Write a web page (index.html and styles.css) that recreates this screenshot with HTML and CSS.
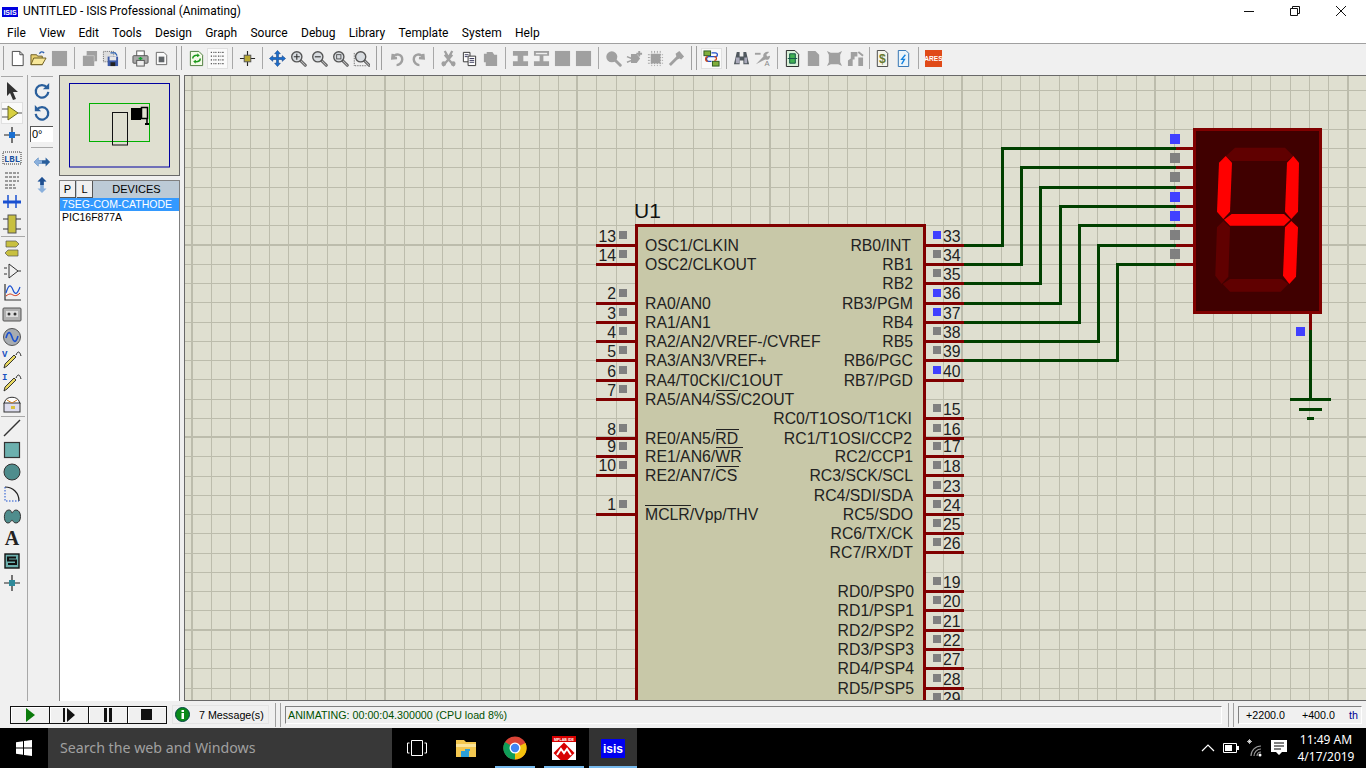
FILE: index.html
```html
<!DOCTYPE html>
<html lang="en">
<head>
    <meta charset="UTF-8">
    <meta name="viewport" content="width=device-width, initial-scale=1.0">
    <title>UNTITLED - ISIS Professional (Animating)</title>
    <link rel="stylesheet" href="styles.css">
</head>
<body>
    <svg class="defs" width="0" height="0">
        <symbol id="mag" viewBox="0 0 20 20">
            <path d="M12 12l6 6" stroke="#555" stroke-width="3.4" stroke-linecap="round"/>
            <path d="M12 12l6 6" stroke="#bbb" stroke-width="1.2" stroke-linecap="round"/>
            <circle cx="8" cy="8" r="6" fill="#d8dce0" stroke="#555" stroke-width="1.6"/>
        </symbol>
        <symbol id="probe" viewBox="0 0 20 20">
            <path d="M2 19l3-2 9-9-2-2-9 9z" fill="#e8d860" stroke="#222" stroke-width=".9"/>
            <path d="M14 6c2-5 4-3 5 1" fill="none" stroke="#222"/>
        </symbol>
    </svg>

    <div class="titlebar">
        <svg class="app-icon" viewBox="0 0 16 10"><rect width="16" height="10" fill="#0000e0"/><text x="8" y="8" class="isis-txt">ISIS</text></svg>
        <span class="title-text">UNTITLED - ISIS Professional (Animating)</span>
        <div class="win-btns">
            <svg width="10" height="10" viewBox="0 0 10 10"><path d="M0 5.5h10" stroke="#111"/></svg>
            <svg width="10" height="10" viewBox="0 0 10 10"><path d="M.5 2.5h7v7h-7zM2.5 2.5v-2h7v7h-2" fill="none" stroke="#111"/></svg>
            <svg width="10" height="10" viewBox="0 0 10 10"><path d="M0 0l10 10M10 0L0 10" stroke="#111"/></svg>
        </div>
    </div>

    <div class="menubar">
        <span>File</span><span>View</span><span>Edit</span><span>Tools</span><span>Design</span><span>Graph</span><span>Source</span><span>Debug</span><span>Library</span><span>Template</span><span>System</span><span>Help</span>
    </div>

    <div class="toolbar">
        <i class="grip first"></i>
        <span class="tb"><svg viewBox="0 0 18 18"><path d="M3.5 1.5h8l3.500 3.500v11.500h-11.500z" fill="#fff" stroke="#444"/><path d="M11.500 1.500v3.500h3.500" fill="none" stroke="#444"/></svg></span>
        <span class="tb"><svg viewBox="0 0 18 18"><path d="M1 5h6l1 1.500h5v9h-12z" fill="#e8d070" stroke="#6a5a20"/><path d="M1 15.500l3-7h13l-4 7z" fill="#f8e89a" stroke="#6a5a20"/><path d="M10 4c1-2.500 3-2.500 5-1" fill="none" stroke="#2b60b0" stroke-width="1.500"/></svg></span>
        <span class="tb"><svg viewBox="0 0 18 18"><rect x="1" y="1" width="16" height="16" fill="#a0a0a0"/></svg></span>
        <i class="sep"></i>
        <span class="tb"><svg viewBox="0 0 18 18"><path d="M6 1h11v11h-3v5h-12v-11h4z" fill="#a0a0a0"/><path d="M6 6h8v6" fill="none" stroke="#c4c4c4"/></svg></span>
        <span class="tb"><svg viewBox="0 0 18 18"><rect x="1.500" y="1.500" width="11" height="11" fill="#ddd" stroke="#666" stroke-dasharray="1 1"/><path d="M6 7h11v10h-11z" fill="#3c5aa8"/><rect x="8" y="7" width="7" height="4" fill="#e8e8e8"/><rect x="9" y="13" width="5" height="4" fill="#222"/><path d="M9 3h5l2 3" fill="none" stroke="#2b60b0" stroke-width="1.300"/></svg></span>
        <i class="sep"></i>
        <span class="tb"><svg viewBox="0 0 18 18"><rect x="5" y="1" width="8" height="6" fill="#fff" stroke="#555"/><rect x="1" y="6" width="16" height="8" rx="1" fill="#a8a8a8" stroke="#555"/><rect x="5" y="11" width="8" height="6" fill="#eee" stroke="#555"/><path d="M7 9h4M9 7.500v3" stroke="#10a030" stroke-width="1.500"/></svg></span>
        <span class="tb"><svg viewBox="0 0 18 18"><path d="M3.500 2.500h8l3 3v10h-11z" fill="#fafafa" stroke="#666"/><rect x="6" y="7" width="6" height="6" fill="#606468"/></svg></span>
        <i class="grip"></i>
        <span class="tb"><svg viewBox="0 0 18 18"><path d="M2.500 1.500h9l4 4v11h-13z" fill="#f4fbe8" stroke="#4a7a3a"/><path d="M5 9c0-3 3-4 6-3M13 9c0 3-3 4-6 3" fill="none" stroke="#1c9a1c" stroke-width="1.700"/><path d="M10 3.500l2.500 2.500-3 1.500zM8 14.500l-2.500-2.500 3-1.500z" fill="#1c9a1c"/></svg></span>
        <span class="tb on"><svg viewBox="0 0 18 18"><path d="M2 2.500h14M2 6.500h14M2 10.500h14M2 14.500h14" stroke="#444" stroke-dasharray="1 1.500"/><path d="M2 2v15M6 2v15M10 2v15M14 2v15" stroke="#444" stroke-dasharray="1 3" transform="translate(.5 0)"/></svg></span>
        <i class="sep"></i>
        <span class="tb"><svg viewBox="0 0 18 18"><path d="M9 1v16M1 9h16" stroke="#222" stroke-width="1.200"/><rect x="5.500" y="5.500" width="7" height="7" fill="#b8a830" stroke="#555"/></svg></span>
        <i class="sep"></i>
        <span class="tb"><svg viewBox="0 0 18 18"><path d="M9 .5l3 3.500h-2v4h4v-2l3.500 3-3.500 3v-2h-4v4h2l-3 3.500-3-3.500h2v-4h-4v2l-3.500-3 3.500-3v2h4v-4h-2z" fill="#1a6fd0" stroke="#0a3a80" stroke-width=".6"/></svg></span>
        <span class="tb"><svg viewBox="0 0 20 20"><use href="#mag"/><path d="M4.500 8h7M8 4.500v7" stroke="#333" stroke-width="1.300"/></svg></span>
        <span class="tb"><svg viewBox="0 0 20 20"><use href="#mag"/><path d="M4.500 8h7" stroke="#333" stroke-width="1.300"/></svg></span>
        <span class="tb"><svg viewBox="0 0 20 20"><use href="#mag"/><rect x="5.500" y="5.500" width="5" height="5" fill="none" stroke="#444"/></svg></span>
        <span class="tb"><svg viewBox="0 0 20 20"><path d="M1.500 3.500v15h15" fill="none" stroke="#444" stroke-dasharray="1 1"/><use href="#mag" x="1"/></svg></span>
        <i class="grip wide"></i>
        <span class="tb"><svg viewBox="0 0 18 18"><path d="M4 4l-.5 5 5-.5M4 8c3-5 10-4 10 2 0 3-3 6-6 6" fill="none" stroke="#a0a0a0" stroke-width="2.600"/></svg></span>
        <span class="tb"><svg viewBox="0 0 18 18"><path d="M14 4l.5 5-5-.5M14 8c-3-5-10-4-10 2 0 3 3 6 6 6" fill="none" stroke="#a0a0a0" stroke-width="2.600"/></svg></span>
        <i class="sep"></i>
        <span class="tb"><svg viewBox="0 0 18 18"><path d="M5 1l4 7 4-7M3 17l10-12M15 17l-10-12" fill="none" stroke="#a0a0a0" stroke-width="2.400"/><circle cx="4" cy="14.500" r="2.500" fill="#a0a0a0"/><circle cx="14" cy="14.500" r="2.500" fill="#a0a0a0"/></svg></span>
        <span class="tb"><svg viewBox="0 0 18 18"><path d="M2.500 2.500h7v10h-7z" fill="#fff" stroke="#333"/><path d="M7.500 6.500h8v10h-8z" fill="#fff" stroke="#333"/><path d="M9 9h5M9 11h5M9 13h5" stroke="#335"/><path d="M4 5h4M4 7h3" stroke="#335"/></svg></span>
        <span class="tb"><svg viewBox="0 0 18 18"><path d="M5 2h6l2 3h3v12h-12v-4h-2v-9h3z" fill="#a0a0a0"/></svg></span>
        <i class="sep"></i>
        <span class="tb"><svg viewBox="0 0 18 18"><path d="M1 1h16v5h-5v6h5v5h-16v-5h5v-6h-5z" fill="#a0a0a0"/></svg></span>
        <span class="tb"><svg viewBox="0 0 18 18"><path d="M1 1h16v5h-6v6h6v5h-16v-5h6v-6h-6z" fill="#a0a0a0"/><path d="M3 3h12v1.500h-12" fill="#eee"/></svg></span>
        <span class="tb"><svg viewBox="0 0 18 18"><rect x="1" y="1" width="16" height="16" fill="#a0a0a0"/></svg></span>
        <span class="tb"><svg viewBox="0 0 18 18"><rect x="1" y="1" width="16" height="16" fill="#a0a0a0"/></svg></span>
        <i class="sep"></i>
        <span class="tb"><svg viewBox="0 0 20 20"><path d="M12 12l6 6" stroke="#a0a0a0" stroke-width="3.400" stroke-linecap="round"/><circle cx="8" cy="8" r="6.500" fill="#a0a0a0"/></svg></span>
        <span class="tb"><svg viewBox="0 0 18 18"><path d="M1 13l5-2M1 7l5 2M6 5h5l3 4-3 4h-5z" fill="#a0a0a0" stroke="#a0a0a0" stroke-width="1.500"/><path d="M14 1v6M11 4h6" stroke="#a0a0a0" stroke-width="2"/></svg></span>
        <span class="tb"><svg viewBox="0 0 18 18"><rect x="4" y="4" width="10" height="10" fill="#a0a0a0"/><path d="M5 1v16M8 1v16M11 1v16M14 1v16M1 5h16M1 8h16M1 11h16M1 14h16" stroke="#a0a0a0" stroke-dasharray="2 1"/></svg></span>
        <span class="tb"><svg viewBox="0 0 18 18"><path d="M2 16l9-9" stroke="#a0a0a0" stroke-width="3"/><path d="M8 4l4-3 5 6-3 3-2-1-2 1z" fill="#a0a0a0"/></svg></span>
        <i class="grip"></i>
        <span class="tb on"><svg viewBox="0 0 18 18"><rect x="1" y="1" width="7" height="5" fill="#7fae3c" stroke="#2d5a20"/><rect x="10" y="12" width="7" height="5" fill="#7fae3c" stroke="#2d5a20"/><path d="M9 3h4c3 0 3 4 0 4H6c-3 0-3 5 0 5h3" fill="none" stroke="#2050c8" stroke-width="1.300"/><path d="M5 7c-3 0-3 5 0 5M12 7c3 0 3 4 0 4" fill="none" stroke="#d04010" stroke-width="1.300"/></svg></span>
        <i class="sep"></i>
        <span class="tb"><svg viewBox="0 0 18 18"><path d="M4 2h3v5h4v-5h3l3 13h-6v-4h-4v4h-6z" fill="#50585e"/><path d="M3 8h4v6h-4zM12 8h3v6h-3z" fill="#aab"/></svg></span>
        <span class="tb"><svg viewBox="0 0 18 18"><path d="M2 15l8-8c-1-3 2-6 6-5l-3 3 1 2 3-1c0 4-3 5-5 4" fill="#a0a0a0"/><path d="M1 4h6" stroke="#a0a0a0" stroke-width="2"/><text x="11" y="17" class="tiny">A</text></svg></span>
        <i class="sep"></i>
        <span class="tb"><svg viewBox="0 0 18 18"><path d="M2.500 .5h9l4 4v13h-13z" fill="#d8f0d8" stroke="#222"/><path d="M6 4h6v10h-6z" fill="#40b050" stroke="#154"/><path d="M4 9h10" stroke="#154"/></svg></span>
        <span class="tb"><svg viewBox="0 0 18 18"><path d="M3 1h8l4 4v12h-12z" fill="#a0a0a0"/></svg></span>
        <span class="tb"><svg viewBox="0 0 18 18"><path d="M1 1l4 2h8l4-2-2 4v8l2 4-4-2h-8l-4 2 2-4v-8z" fill="#a0a0a0"/></svg></span>
        <span class="tb"><svg viewBox="0 0 18 18"><path d="M4 2h7v5h-3v3h-2v7h-5v-6l3-2zM12 8h5v9h-5z" fill="#a0a0a0"/><path d="M12 2l5 4" stroke="#a0a0a0" stroke-width="2"/></svg></span>
        <i class="sep thin"></i>
        <span class="tb"><svg viewBox="0 0 18 18"><path d="M3.500 .5h8l3 3v14h-11z" fill="#f4f4ea" stroke="#444"/><text x="9" y="14" class="dollar">$</text></svg></span>
        <span class="tb"><svg viewBox="0 0 18 18"><path d="M3.500 .5h8l3 3v14h-11z" fill="#eaf4fa" stroke="#2b6fb0"/><path d="M11 5l-4 5h3l-3 5" fill="none" stroke="#1080e0" stroke-width="1.400"/></svg></span>
        <i class="sep"></i>
        <span class="tb"><svg viewBox="0 0 18 18"><rect width="18" height="18" fill="#e04a18"/><text x="9" y="12" class="ares">ARES</text></svg></span>
    </div>

    <div class="main">
        <div class="rail">
            <hr class="rail-top">
            <span class="ri"><svg viewBox="0 0 20 20"><path d="M5 1l11 10h-5l3 7-3 1-3-7-3 3z" fill="#333"/></svg></span>
            <span class="ri on"><svg viewBox="0 0 20 20"><path d="M6 3l10 7-10 7z" fill="#d8d040" stroke="#6a6a20"/><path d="M0 6h6M0 14h6M16 10h4" stroke="#555"/></svg></span>
            <span class="ri"><svg viewBox="0 0 20 20"><path d="M10 2v16M2 10h16" stroke="#222" stroke-width="1.200"/><rect x="7" y="7" width="6" height="6" fill="#1a6fd0"/></svg></span>
            <span class="ri"><svg viewBox="0 0 20 20"><rect x="1" y="4" width="18" height="12" fill="none" stroke="#333" stroke-dasharray="1 1"/><text x="10" y="14" class="lbl">LBL</text></svg></span>
            <span class="ri"><svg viewBox="0 0 20 20"><path d="M3 3h14M3 7h14M3 11h14M3 15h10M3 18h12" stroke="#444" stroke-dasharray="3 1"/></svg></span>
            <span class="ri"><svg viewBox="0 0 20 20"><path d="M1 10h18" stroke="#1a50d0" stroke-width="3"/><path d="M6 3v13M14 3v13" stroke="#1a50d0" stroke-width="1.500"/></svg></span>
            <span class="ri"><svg viewBox="0 0 20 20"><rect x="6" y="1" width="8" height="18" fill="#c8c040" stroke="#555"/><path d="M1 5h5M1 15h5M14 5h5M14 15h5" stroke="#333"/></svg></span>
            <hr class="rail-sep">
            <span class="ri"><svg viewBox="0 0 20 20"><path d="M4 3h10l3 3-3 3H4zM16 12H6l-3 3 3 3h10z" fill="#c8c040" stroke="#555" stroke-width=".7"/></svg></span>
            <span class="ri"><svg viewBox="0 0 20 20"><path d="M7 3l9 7-9 7zM2 7h3M2 13h3M16 10h3" fill="none" stroke="#333"/></svg></span>
            <span class="ri"><svg viewBox="0 0 20 20"><path d="M3 1v16h16" fill="none" stroke="#333" stroke-width="1.200"/><path d="M4 10c3-10 5-8 7-3s4 5 7-3" fill="none" stroke="#1a50d0" stroke-width="1.200"/><path d="M4 13c4-3 5-2 7-1s4 1 7-2" fill="none" stroke="#d03010"/></svg></span>
            <span class="ri"><svg viewBox="0 0 20 20"><rect x="1" y="3" width="18" height="13" rx="1" fill="#b0b0b0" stroke="#555"/><rect x="4" y="6" width="12" height="6" fill="#ddd"/><circle cx="7" cy="9" r="1.500" fill="#333"/><circle cx="13" cy="9" r="1.500" fill="#333"/></svg></span>
            <span class="ri"><svg viewBox="0 0 20 20"><circle cx="10" cy="10" r="8.500" fill="#a8acb0" stroke="#555"/><path d="M4 11c2-7 4-7 6-1s4 6 6-1" fill="none" stroke="#1a50d0" stroke-width="1.600"/></svg></span>
            <span class="ri"><svg viewBox="0 0 20 20"><use href="#probe"/><text x="0" y="8" class="probe-l">V</text></svg></span>
            <span class="ri"><svg viewBox="0 0 20 20"><use href="#probe"/><text x="0" y="8" class="probe-l">I</text></svg></span>
            <span class="ri"><svg viewBox="0 0 20 20"><path d="M3 7c2-5 12-5 14 0l1 3h-16z" fill="#fff" stroke="#333"/><rect x="2" y="9" width="16" height="9" fill="#dde" stroke="#333"/><path d="M5 6l5 3 5-3" fill="none" stroke="#d08020"/><rect x="9" y="12" width="4" height="3" fill="#d8c040"/></svg></span>
            <hr class="rail-sep">
            <span class="ri"><svg viewBox="0 0 20 20"><path d="M2 18L18 2" stroke="#333" stroke-width="1.500"/></svg></span>
            <span class="ri"><svg viewBox="0 0 20 20"><rect x="2.500" y="2.500" width="15" height="15" fill="#6cb0ae" stroke="#333" stroke-width="1.200"/></svg></span>
            <span class="ri"><svg viewBox="0 0 20 20"><circle cx="10" cy="10" r="8" fill="#4f8d8d" stroke="#333"/></svg></span>
            <span class="ri"><svg viewBox="0 0 20 20"><path d="M3 3c8 0 14 6 14 14" fill="none" stroke="#222" stroke-width="1.200"/><path d="M3 3v14h14" fill="none" stroke="#1a50d0" stroke-dasharray="1.500 1.500"/></svg></span>
            <span class="ri"><svg viewBox="0 0 20 20"><path d="M7 3c3 0 2 3 3 3s1-3 4-3c6 0 6 13 0 13-3 0-3-3-4-3s-1 3-4 3C1 16 1 3 7 3z" fill="#4f8d8d" stroke="#333"/></svg></span>
            <span class="ri letter">A</span>
            <span class="ri"><svg viewBox="0 0 20 20"><rect x="3" y="3" width="14" height="14" fill="#6cb0ae" stroke="#111" stroke-width="1.400"/><path d="M14 6.500H6v3h8v3.500H6" fill="none" stroke="#111" stroke-width="2"/></svg></span>
            <span class="ri"><svg viewBox="0 0 20 20"><path d="M10 2v16M2 10h16" stroke="#222" stroke-width="1.200"/><rect x="7" y="7" width="6" height="6" fill="#2f8a9a"/></svg></span>
        </div>

        <div class="rail2">
            <hr class="rail-top">
            <span class="ri"><svg viewBox="0 0 20 20"><path d="M15.500 6A7 7 0 1 0 17 11" fill="none" stroke="#2a5f9c" stroke-width="2.500"/><path d="M18 1v7h-7z" fill="#2a5f9c"/></svg></span>
            <span class="ri"><svg viewBox="0 0 20 20"><path d="M4.500 6A7 7 0 1 1 3 11" fill="none" stroke="#2a5f9c" stroke-width="2.500"/><path d="M2 1v7h7z" fill="#2a5f9c"/></svg></span>
            <div class="angle">0°</div>
            <hr class="rail2-sep">
            <span class="ri"><svg viewBox="0 0 20 20"><path d="M1 10l5-5v3h8v-3l5 5-5 5v-3h-8v3z" fill="#2a5f9c"/><path d="M1 10l5-5v3h4v4h-4v3z" fill="#8ab0dc"/></svg></span>
            <span class="ri"><svg viewBox="0 0 20 20"><path d="M10 1l5 5h-3v8h3l-5 5-5-5h3v-8h-3z" fill="#8ab0dc"/><path d="M10 1l5 5h-3v4h-4v-4h-3z" fill="#1f4f90"/></svg></span>
        </div>

        <div class="panel">
            <div class="overview">
                <svg width="119" height="99" viewBox="60 76 119 99">
                    <rect x="69.500" y="83.500" width="100" height="83.500" fill="none" stroke="#0000a0"/>
                    <rect x="89.500" y="103.500" width="60" height="38" fill="none" stroke="#00b000"/>
                    <rect x="112.500" y="112.500" width="15" height="32.500" fill="none" stroke="#111"/>
                    <rect x="131" y="108" width="10" height="12" fill="#000"/>
                    <path d="M141.500 107.500h6v11h-6zM147 118v7M131 113h10" fill="none" stroke="#000" stroke-width="1.500"/>
                    <rect x="145" y="123" width="4" height="2" fill="#000"/>
                </svg>
            </div>
            <div class="devices">
                <div class="dev-head">
                    <span class="dev-btn">P</span>
                    <span class="dev-btn">L</span>
                    <span class="dev-title">DEVICES</span>
                </div>
                <ul class="dev-list">
                    <li class="sel">7SEG-COM-CATHODE</li>
                    <li>PIC16F877A</li>
                </ul>
            </div>
        </div>

        <div class="canvas">
            <svg width="1181" height="624" viewBox="185 76 1181 624">
                <path class="grid" d="M192.500 76V700M211.500 76V700M230.500 76V700M250.500 76V700M269.500 76V700M288.500 76V700M307.500 76V700M327.500 76V700M346.500 76V700M365.500 76V700M404.500 76V700M423.500 76V700M442.500 76V700M462.500 76V700M481.500 76V700M500.500 76V700M519.500 76V700M539.500 76V700M558.500 76V700M596.500 76V700M616.500 76V700M635.500 76V700M654.500 76V700M673.500 76V700M693.500 76V700M712.500 76V700M731.500 76V700M750.500 76V700M789.500 76V700M808.500 76V700M828.500 76V700M847.500 76V700M866.500 76V700M885.500 76V700M905.500 76V700M924.500 76V700M943.500 76V700M982.500 76V700M1001.500 76V700M1020.500 76V700M1039.500 76V700M1059.500 76V700M1078.500 76V700M1097.500 76V700M1116.500 76V700M1136.500 76V700M1174.500 76V700M1193.500 76V700M1213.500 76V700M1232.500 76V700M1251.500 76V700M1270.500 76V700M1290.500 76V700M1309.500 76V700M1328.500 76V700M185 90.500H1366M185 110.500H1366M185 129.500H1366M185 148.500H1366M185 167.500H1366M185 187.500H1366M185 206.500H1366M185 225.500H1366M185 264.500H1366M185 283.500H1366M185 302.500H1366M185 322.500H1366M185 341.500H1366M185 360.500H1366M185 379.500H1366M185 399.500H1366M185 418.500H1366M185 456.500H1366M185 476.500H1366M185 495.500H1366M185 514.500H1366M185 533.500H1366M185 553.500H1366M185 572.500H1366M185 591.500H1366M185 610.500H1366M185 649.500H1366M185 668.500H1366M185 688.500H1366"/>
                <path class="grid-major" d="M192 76V700M385 76V700M577 76V700M770 76V700M962 76V700M1155 76V700M1348 76V700M185 245H1366M185 437H1366M185 630H1366"/>

                <text x="634" y="218" class="ref">U1</text>
                <rect x="636.500" y="225.500" width="288" height="520" class="chip"/>

                <path class="pins" d="M596 245H636M596 264H636M596 303H636M596 322H636M596 341H636M596 360H636M596 380H636M596 399H636M596 438H636M596 456H636M596 475H636M596 514H636M924 245H964M924 264H964M924 283H964M924 303H964M924 322H964M924 341H964M924 360H964M924 380H964M924 418H964M924 438H964M924 456H964M924 475H964M924 495H964M924 514H964M924 533H964M924 552H964M924 591H964M924 610H964M924 630H964M924 649H964M924 668H964M924 688H964"/>
                <path class="wires" d="M964 245H1002V148H1176M964 264H1021V167H1176M964 283H1040V187H1176M964 303H1060V206H1176M964 322H1079V225H1176M964 341H1098V245H1176M964 360H1117V264H1176"/>
                <path class="pins" d="M1176 148H1193M1176 167H1193M1176 187H1193M1176 206H1193M1176 225H1193M1176 245H1193M1176 264H1193M1310 314V330"/>

                <path class="sq-grey" d="M619 231h8v8h-8zM619 250h8v8h-8zM619 289h8v8h-8zM619 308h8v8h-8zM619 327h8v8h-8zM619 346h8v8h-8zM619 366h8v8h-8zM619 385h8v8h-8zM619 424h8v8h-8zM619 442h8v8h-8zM619 461h8v8h-8zM619 500h8v8h-8zM933 250h8v8h-8zM933 269h8v8h-8zM933 327h8v8h-8zM933 346h8v8h-8zM933 404h8v8h-8zM933 424h8v8h-8zM933 442h8v8h-8zM933 461h8v8h-8zM933 481h8v8h-8zM933 500h8v8h-8zM933 519h8v8h-8zM933 538h8v8h-8zM933 577h8v8h-8zM933 596h8v8h-8zM933 616h8v8h-8zM933 635h8v8h-8zM933 654h8v8h-8zM933 674h8v8h-8zM933 693h8v8h-8zM1170 153h10v10h-10zM1170 172h10v10h-10zM1170 230h10v10h-10zM1170 249h10v10h-10z"/>
                <path class="sq-blue" d="M933 231h8v8h-8zM933 289h8v8h-8zM933 308h8v8h-8zM933 366h8v8h-8zM1170 134h10v10h-10zM1170 192h10v10h-10zM1170 211h10v10h-10zM1296 327h9v9h-9z"/>

                <g class="pin-name">
                    <text x="645" y="251">OSC1/CLKIN</text>
                    <text x="645" y="270">OSC2/CLKOUT</text>
                    <text x="645" y="309">RA0/AN0</text>
                    <text x="645" y="328">RA1/AN1</text>
                    <text x="645" y="347">RA2/AN2/VREF-/CVREF</text>
                    <text x="645" y="366">RA3/AN3/VREF+</text>
                    <text x="645" y="386">RA4/T0CKI/C1OUT</text>
                    <text x="645" y="405">RA5/AN4/SS/C2OUT</text>
                    <text x="645" y="444">RE0/AN5/RD</text>
                    <text x="645" y="462">RE1/AN6/WR</text>
                    <text x="645" y="481">RE2/AN7/CS</text>
                    <text x="645" y="520">MCLR/Vpp/THV</text>
                </g>
                <path class="overline" d="M716 390.500H738M716 429.500H739M716 447.500H743M716 466.500H739M645 505.500H691"/>
                <g class="pin-name end">
                    <text x="911" y="251">RB0/INT</text>
                    <text x="913" y="270">RB1</text>
                    <text x="913" y="289">RB2</text>
                    <text x="913" y="309">RB3/PGM</text>
                    <text x="913" y="328">RB4</text>
                    <text x="913" y="347">RB5</text>
                    <text x="913" y="366">RB6/PGC</text>
                    <text x="913" y="386">RB7/PGD</text>
                    <text x="912" y="424">RC0/T1OSO/T1CKI</text>
                    <text x="912" y="444">RC1/T1OSI/CCP2</text>
                    <text x="913" y="462">RC2/CCP1</text>
                    <text x="913" y="481">RC3/SCK/SCL</text>
                    <text x="913" y="501">RC4/SDI/SDA</text>
                    <text x="913" y="520">RC5/SDO</text>
                    <text x="913" y="539">RC6/TX/CK</text>
                    <text x="913" y="558">RC7/RX/DT</text>
                    <text x="914" y="597">RD0/PSP0</text>
                    <text x="914" y="616">RD1/PSP1</text>
                    <text x="914" y="636">RD2/PSP2</text>
                    <text x="914" y="655">RD3/PSP3</text>
                    <text x="914" y="674">RD4/PSP4</text>
                    <text x="914" y="694">RD5/PSP5</text>
                </g>
                <g class="pin-name end">
                    <text x="616" y="242">13</text>
                    <text x="616" y="261">14</text>
                    <text x="616" y="299">2</text>
                    <text x="616" y="319">3</text>
                    <text x="616" y="338">4</text>
                    <text x="616" y="357">5</text>
                    <text x="616" y="377">6</text>
                    <text x="616" y="396">7</text>
                    <text x="616" y="435">8</text>
                    <text x="616" y="452">9</text>
                    <text x="616" y="471">10</text>
                    <text x="616" y="510">1</text>
                </g>
                <g class="pin-name">
                    <text x="943" y="242">33</text>
                    <text x="943" y="261">34</text>
                    <text x="943" y="280">35</text>
                    <text x="943" y="299">36</text>
                    <text x="943" y="319">37</text>
                    <text x="943" y="338">38</text>
                    <text x="943" y="357">39</text>
                    <text x="943" y="377">40</text>
                    <text x="943" y="415">15</text>
                    <text x="943" y="435">16</text>
                    <text x="943" y="452">17</text>
                    <text x="943" y="472">18</text>
                    <text x="943" y="492">23</text>
                    <text x="943" y="511">24</text>
                    <text x="943" y="530">25</text>
                    <text x="943" y="549">26</text>
                    <text x="943" y="588">19</text>
                    <text x="943" y="607">20</text>
                    <text x="943" y="627">21</text>
                    <text x="943" y="646">22</text>
                    <text x="943" y="665">27</text>
                    <text x="943" y="685">28</text>
                    <text x="943" y="704">29</text>
                </g>

                <rect x="1194.500" y="129.500" width="126" height="183" class="seg-box"/>
                <polygon class="seg-off" points="1226,156 1235,147.700 1285,147.700 1293.300,156 1286.700,161 1231.700,161"/>
                <polygon class="seg-on" points="1293.300,156 1299,162.700 1298,211.700 1291.300,219 1285,211.700 1287,162.700"/>
                <polygon class="seg-on" points="1225.700,156 1232,162.700 1230,211.700 1223.300,219 1217,211.700 1219,162.700"/>
                <polygon class="seg-on" points="1224,219.700 1231.700,214 1284,214 1290.300,219.700 1284,225.700 1230,225.700"/>
                <polygon class="seg-on" points="1291.300,221 1298,227.300 1296,276.700 1289.300,284 1283,275.700 1285,227.300"/>
                <polygon class="seg-off" points="1223.300,221 1230,227.300 1228.300,276.700 1221.700,284 1215.300,275.700 1217,227.300"/>
                <polygon class="seg-off" points="1222.700,284 1230,279 1281.700,279 1288.300,284 1280.700,291.700 1230,291.700"/>

                <path class="wires" d="M1310 330V399M1290 399.500H1331M1299 409.500H1322M1307 418.500H1314"/>
            </svg>
        </div>
    </div>

    <div class="statusbar">
        <div class="player">
            <span class="pl"><svg width="12" height="14" viewBox="0 0 12 14"><path d="M2 0l9 7-9 7z" fill="#0a7a0a"/></svg></span>
            <span class="pl"><svg width="14" height="14" viewBox="0 0 14 14"><path d="M1 0h2v14H1zM5 0l8 7-8 7z" fill="#111"/></svg></span>
            <span class="pl"><svg width="12" height="14" viewBox="0 0 12 14"><path d="M2 0h3v14H2zM7 0h3v14H7z" fill="#111"/></svg></span>
            <span class="pl"><svg width="12" height="12" viewBox="0 0 12 12"><rect width="11" height="11" fill="#111"/></svg></span>
        </div>
        <div class="messages">
            <svg width="15" height="15" viewBox="0 0 15 15"><circle cx="7.500" cy="7.500" r="7" fill="#0a8a1a" stroke="#044"/><rect x="6.500" y="6" width="2.500" height="6" fill="#fff"/><rect x="6.500" y="3" width="2.500" height="2" fill="#fff"/></svg>
            <span>7 Message(s)</span>
        </div>
        <i class="grip"></i>
        <div class="status-field">ANIMATING: 00:00:04.300000 (CPU load 8%)</div>
        <i class="grip"></i>
        <div class="coords"><span class="cx">+2200.0</span><span class="cy">+400.0</span><span class="unit">th</span></div>
    </div>

    <div class="taskbar">
        <svg class="win-logo" width="16" height="16" viewBox="0 0 16 16"><path d="M0 2.300l7-1v6.300H0zM8 1.100l8-1.100v7.600H8zM0 8.400h7v6.300l-7-1zM8 8.400h8V16l-8-1.100z" fill="#fff"/></svg>
        <div class="search">Search the web and Windows</div>
        <span class="task"><svg width="20" height="16" viewBox="0 0 20 16"><path d="M4.500 .5h11v15h-11zM2.500 3H.5v10h2M17.500 3h2v10h-2" fill="none" stroke="#fff"/></svg></span>
        <span class="task"><svg width="22" height="22" viewBox="0 0 22 22"><path d="M1 3h8l2 2h10v15H1z" fill="#f4c850"/><path d="M1 7h20v3H1z" fill="#fbe49a"/><path d="M6 20v-6h4v-2l5 0v2h-1v6z" fill="#2b9fd8"/></svg></span>
        <span class="task open"><svg width="24" height="24" viewBox="0 0 24 24"><circle cx="12" cy="12" r="11.500" fill="#db4437"/><path d="M12 12L22.500 7A11.500 11.500 0 0 1 12 23.500z" fill="#f4c20d"/><path d="M12 12l-10 -6A11.500 11.500 0 0 0 12 23.500z" fill="#0f9d58"/><circle cx="12" cy="12" r="5.500" fill="#fff"/><circle cx="12" cy="12" r="4.200" fill="#4285f4"/></svg></span>
        <span class="task open"><svg width="24" height="24" viewBox="0 0 24 24"><rect width="24" height="24" fill="#fff"/><rect width="24" height="6" fill="#d80000"/><text x="12" y="4.500" class="mplab">MPLAB IDE</text><path d="M12 6.500l10.500 10.500-7 7h-7l-7-7z" fill="#d80000"/><path d="M5 19l4-6 3 4 3-4 4 6" fill="none" stroke="#fff" stroke-width="2"/></svg></span>
        <span class="task open active"><svg width="24" height="19" viewBox="0 0 24 19"><rect width="24" height="19" fill="#0000f0"/><text x="12" y="14" class="isis-big">isis</text></svg></span>
        <div class="tray">
            <svg width="14" height="8" viewBox="0 0 14 8"><path d="M1 7l6-6 6 6" fill="none" stroke="#fff" stroke-width="1.200"/></svg>
            <svg width="16" height="10" viewBox="0 0 16 10"><path d="M.5 .5h13v9H.5z" fill="none" stroke="#fff"/><rect x="2" y="2" width="7" height="6" fill="#fff"/><rect x="14" y="3" width="2" height="4" fill="#fff"/></svg>
            <svg width="16" height="18" viewBox="0 0 16 18"><path d="M1 1l3 3M4 1L1 4M2.500 0v5M0 2.500h5" stroke="#fff" stroke-width=".7"/><path d="M4 17A10 10 0 0 1 14 7M7 17A7 7 0 0 1 14 10M10 17A4 4 0 0 1 14 13" fill="none" stroke="#999" stroke-width="1.200"/><circle cx="13" cy="16" r="1.500" fill="#fff"/></svg>
            <svg width="16" height="16" viewBox="0 0 16 16"><path d="M0 0h16v12h-5l-3 3-3-3H0z" fill="#fff"/><path d="M3 3h10M3 6h10M3 9h7" stroke="#000"/></svg>
            <div class="clock"><div>11:49 AM</div><div>4/17/2019</div></div>
        </div>
    </div>
</body>
</html>
```

FILE: styles.css
```css
html, body {
    margin: 0;
    padding: 0;
}
body {
    width: 1366px;
    height: 768px;
    overflow: hidden;
    display: flex;
    flex-direction: column;
    background-color: #f0f0f0;
    font-family: "Noto Sans", "Open Sans", sans-serif;
    font-size: 12px;
    color: #000;
}
.defs {
    position: absolute;
}

/* title + menu */
.titlebar {
    height: 22px;
    background-color: #fff;
    display: flex;
    align-items: center;
    flex-shrink: 0;
    font-family: Roboto, sans-serif;
}
.app-icon {
    width: 16px;
    height: 10px;
    margin: 2px 5px 0 2px;
}
.title-text {
    font-size: 11.85px;
}
.win-btns {
    margin-left: auto;
    display: flex;
    gap: 36px;
    padding-right: 20px;
}
.menubar {
    height: 21px;
    background-color: #fff;
    display: flex;
    align-items: center;
    gap: 13.4px;
    padding-left: 7px;
    flex-shrink: 0;
    font-family: Roboto, sans-serif;
}

/* toolbar */
.toolbar {
    height: 32px;
    padding-bottom: 3px;
    box-sizing: border-box;
    border-top: 1px solid #a0a0a0;
    display: flex;
    align-items: center;
    flex-shrink: 0;
}
.tb {
    width: 21px;
    height: 21px;
    display: flex;
    align-items: center;
    justify-content: center;
    box-sizing: border-box;
}
.tb svg {
    width: 17px;
    height: 17px;
}
.tb.on {
    background-color: #fafafa;
    border: 1px solid #e0e0e0;
}
.sep {
    width: 9px;
    height: 22px;
    background: linear-gradient(#a8a8a8, #a8a8a8) center / 1px 100% no-repeat;
}
.sep.thin {
    width: 6px;
}
.grip {
    width: 14px;
    height: 24px;
    background: linear-gradient(#a0a0a0, #a0a0a0) 4px 0 / 1px 100% no-repeat,
                linear-gradient(#a0a0a0, #a0a0a0) 9px 0 / 1px 100% no-repeat;
    flex-shrink: 0;
}
.grip.first {
    width: 7px;
    background: linear-gradient(#a0a0a0, #a0a0a0) 3px 0 / 1px 100% no-repeat;
}
.grip.wide {
    width: 15px;
}

/* left side */
.main {
    height: 626px;
    display: flex;
    flex-shrink: 0;
}
.rail {
    width: 28px;
    border-right: 1px solid #a8a8a8;
    display: flex;
    flex-direction: column;
    align-items: flex-start;
    padding-left: 1px;
    box-sizing: border-box;
    flex-shrink: 0;
}
.rail2 {
    width: 27px;
    display: flex;
    flex-direction: column;
    align-items: center;
    flex-shrink: 0;
}
.rail-top {
    width: 22px;
    height: 1px;
    margin: 1px 0 3px;
    border: 0;
    background-color: #a8a8a8;
}
.ri {
    width: 22px;
    height: 22.2px;
    display: flex;
    align-items: center;
    justify-content: center;
    flex-shrink: 0;
    box-sizing: border-box;
}
.ri svg {
    width: 20px;
    height: 20px;
}
.ri.on {
    background-color: #fafafa;
    border: 1px solid #e0e0e0;
}
.ri.letter {
    font-family: "Liberation Serif", serif;
    font-weight: bold;
    font-size: 20px;
    color: #222;
}
.rail-sep {
    width: 24px;
    height: 1px;
    margin: 1px 0 0;
    border: 0;
    background-color: #a8a8a8;
    flex-shrink: 0;
}
.rail2 .ri svg {
    width: 18px;
    height: 18px;
}
.angle {
    width: 23px;
    height: 16px;
    box-sizing: border-box;
    margin-top: 2px;
    padding-left: 1px;
    background-color: #fff;
    border-top: 1px solid #555;
    border-left: 1px solid #555;
    font-family: "Liberation Sans", Arial, sans-serif;
    font-size: 11px;
    line-height: 15px;
}
.rail2-sep {
    width: 22px;
    height: 1px;
    margin: 5px 0 3px;
    border: 0;
    background-color: #a8a8a8;
}

/* overview + device list */
.panel {
    width: 121px;
    margin-left: 4px;
    display: flex;
    flex-direction: column;
    font-family: "Liberation Sans", Arial, sans-serif;
    flex-shrink: 0;
}
.overview {
    height: 101px;
    box-sizing: border-box;
    border: 1px solid #696969;
    background-color: #dfdfd0;
    display: flex;
}
.devices {
    margin-top: 4px;
    height: 521px;
    border: 1px solid #808080;
    border-bottom: 0;
    box-sizing: border-box;
    background-color: #fff;
    display: flex;
    flex-direction: column;
}
.dev-head {
    height: 17px;
    display: flex;
    background-color: #bccad6;
    flex-shrink: 0;
}
.dev-btn {
    width: 16px;
    margin-right: 1px;
    box-sizing: border-box;
    background-color: #f0f0f0;
    border-right: 1px solid #555;
    border-bottom: 1px solid #555;
    text-align: center;
    font-size: 11px;
    line-height: 16px;
}
.dev-title {
    flex: 1;
    text-align: center;
    font-size: 11px;
    line-height: 16px;
}
.dev-list {
    list-style: none;
    margin: 0;
    padding: 0;
    font-size: 10.5px;
}
.dev-list li {
    height: 13px;
    line-height: 13px;
    padding-left: 2px;
}
.dev-list .sel {
    background-color: #3399ff;
    color: #fff;
}

/* schematic */
.canvas {
    width: 1182px;
    height: 626px;
    margin-left: 4px;
    box-sizing: border-box;
    border-top: 1px solid #696969;
    border-left: 1px solid #696969;
    border-bottom: 1px solid #696969;
    background-color: #dfdfd0;
    overflow: hidden;
    flex-shrink: 0;
}
.canvas svg {
    display: block;
}
.grid {
    stroke: #bcbcac;
    stroke-width: 1;
    fill: none;
    shape-rendering: crispEdges;
}
.grid-major {
    stroke: #bcbcac;
    stroke-width: 2;
    fill: none;
    shape-rendering: crispEdges;
}
.chip {
    fill: #c8c8a8;
    stroke: #800000;
    stroke-width: 3;
    shape-rendering: crispEdges;
}
.pins {
    stroke: #800000;
    stroke-width: 3;
    fill: none;
    shape-rendering: crispEdges;
}
.wires {
    stroke: #004000;
    stroke-width: 3;
    fill: none;
    shape-rendering: crispEdges;
}
.sq-grey {
    fill: #808080;
}
.sq-blue {
    fill: #4040ff;
}
.pin-name {
    font-family: "Liberation Sans", Arial, sans-serif;
    font-size: 15.8px;
    fill: #222;
}
.pin-name.end {
    text-anchor: end;
}
.ref {
    font-family: "Liberation Sans", Arial, sans-serif;
    font-size: 21px;
    fill: #111;
}
.overline {
    stroke: #222;
    stroke-width: 1;
    fill: none;
    shape-rendering: crispEdges;
}
.seg-box {
    fill: #400000;
    stroke: #800000;
    stroke-width: 3;
    shape-rendering: crispEdges;
}
.seg-on {
    fill: #ff0000;
}
.seg-off {
    fill: #600000;
}

/* svg icon text */
.isis-txt {
    font-family: "Liberation Sans", Arial, sans-serif;
    font-weight: bold;
    font-size: 7px;
    text-anchor: middle;
    fill: #fff;
}
.isis-big {
    font-family: "Liberation Sans", Arial, sans-serif;
    font-weight: bold;
    font-size: 12px;
    text-anchor: middle;
    fill: #fff;
}
.tiny {
    font-family: "Liberation Sans", Arial, sans-serif;
    font-size: 8px;
    fill: #888;
}
.dollar {
    font-family: "Liberation Sans", Arial, sans-serif;
    font-weight: bold;
    font-size: 13px;
    text-anchor: middle;
    fill: #6a7a30;
}
.ares {
    font-family: "Liberation Sans", Arial, sans-serif;
    font-weight: bold;
    font-size: 7px;
    text-anchor: middle;
    fill: #fff;
}
.lbl {
    font-family: "Liberation Mono", monospace;
    font-weight: bold;
    font-size: 9px;
    text-anchor: middle;
    fill: #1a50a0;
}
.probe-l {
    font-family: "Liberation Mono", monospace;
    font-weight: bold;
    font-size: 9px;
    fill: #1a50c0;
}
.mplab {
    font-family: "Liberation Sans", Arial, sans-serif;
    font-weight: bold;
    font-size: 3.6px;
    text-anchor: middle;
    fill: #fff;
}

/* status bar */
.statusbar {
    height: 27px;
    display: flex;
    align-items: center;
    padding-left: 10px;
    flex-shrink: 0;
    font-family: "Liberation Sans", Arial, sans-serif;
    font-size: 10.7px;
}
.statusbar .grip {
    margin-left: 2px;
}
.player {
    width: 157px;
    height: 18px;
    box-sizing: border-box;
    border: 1px solid #111;
    display: flex;
    flex-shrink: 0;
}
.pl {
    flex: 1;
    display: flex;
    align-items: center;
    justify-content: center;
    border-right: 1px solid #111;
    box-shadow: inset 1px 1px 0 #fff;
}
.pl:last-child {
    border-right: 0;
}
.messages {
    width: 97px;
    height: 19px;
    margin-left: 5px;
    box-sizing: border-box;
    border: 1px solid #e4e4e4;
    display: flex;
    align-items: center;
    gap: 9px;
    padding-left: 2px;
    flex-shrink: 0;
}
.status-field {
    width: 937px;
    height: 18px;
    box-sizing: border-box;
    border-top: 1px solid #808080;
    border-left: 1px solid #808080;
    border-right: 1px solid #fff;
    border-bottom: 1px solid #fff;
    color: #005000;
    line-height: 16px;
    padding-left: 2px;
    flex-shrink: 0;
}
.coords {
    width: 124px;
    height: 18px;
    box-sizing: border-box;
    border-top: 1px solid #808080;
    border-left: 1px solid #808080;
    border-right: 1px solid #fff;
    border-bottom: 1px solid #fff;
    display: flex;
    align-items: center;
    padding-left: 7px;
    flex-shrink: 0;
}
.cy {
    margin-left: 17px;
}
.unit {
    margin-left: auto;
    margin-right: 3px;
    color: #000090;
}

/* windows taskbar */
.taskbar {
    height: 40px;
    background-color: #000;
    display: flex;
    align-items: center;
    flex-shrink: 0;
    color: #fff;
}
.win-logo {
    margin-left: 16px;
    flex-shrink: 0;
}
.search {
    width: 344px;
    height: 40px;
    margin-left: 16px;
    padding-left: 12px;
    box-sizing: border-box;
    background-color: #383838;
    color: #a0a0a0;
    font-size: 14.2px;
    line-height: 40px;
    flex-shrink: 0;
}
.task {
    width: 49px;
    height: 40px;
    display: flex;
    align-items: center;
    justify-content: center;
    flex-shrink: 0;
}
.task.open {
    background: linear-gradient(#76b9ed, #76b9ed) center bottom / 40px 2px no-repeat;
}
.task.active {
    width: 48px;
    margin-left: 1px;
    background: linear-gradient(#76b9ed, #76b9ed) center bottom / 48px 2px no-repeat, #333;
}
.tray {
    margin-left: auto;
    display: flex;
    align-items: center;
    gap: 8px;
    padding-right: 7px;
}
.clock {
    margin-left: -2px;
    width: 66px;
    font-size: 12px;
    line-height: 17px;
    text-align: center;
}
```
